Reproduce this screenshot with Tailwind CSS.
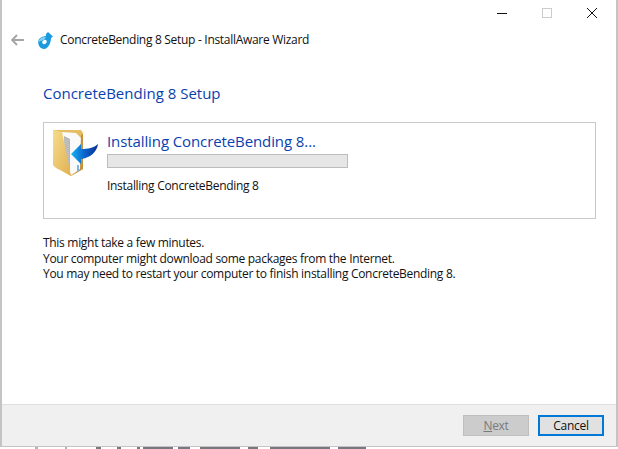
<!doctype html>
<html><head><meta charset="utf-8"><script src="https://cdn.jsdelivr.net/npm/@tailwindcss/browser@4"></script></head>
<body class="m-0 bg-white">
<div class="relative w-[618px] h-[449px] overflow-hidden bg-white font-['Open_Sans','Noto_Sans',sans-serif] text-[12px] tracking-[-0.3px] text-[#111]">
  <svg width="618" height="2" viewBox="0 0 618 2" class="absolute left-0 bottom-0">
    <path d="M35 0h3v2h-3zM65 0h2v2h-2z" fill="#b5b5b5"/>
    <path d="M96 0h5v2h-5zM117 0h4v2h-4zM137 0h3v2h-3zM143 0h30v2h-30zM178 0h12v2h-12zM200 0h40v2h-40zM248 0h10v2h-10zM270 0h60v2h-60zM338 0h28v2h-28z" fill="#4a4a55" fill-opacity="0.75"/>
  </svg>
  <div class="relative flex flex-col h-[447px] w-[618px] border-l-2 border-r-2 border-b border-[#c4c4c4] bg-white">
    <div class="flex justify-end h-[27px] pr-[19px] pt-[8px] gap-[35px] items-start">
      <svg width="10" height="10" viewBox="0 0 10 10"><path d="M0 5.500H10" stroke="#111" stroke-width="1"/></svg>
      <svg width="10" height="10" viewBox="0 0 10 10"><rect x=".5" y=".5" width="9" height="9" fill="none" stroke="#ccc"/></svg>
      <svg width="10" height="10" viewBox="0 0 10 10"><path d="M0 0l10 10M10 0L0 10" stroke="#111" stroke-width="1"/></svg>
    </div>
    <div class="flex items-center h-[26px] pl-[9px]">
      <svg width="14" height="12" viewBox="0 0 14 12"><path d="M6 1L1.200 6 6 11M1.500 6H13" fill="none" stroke="#a6a6a6" stroke-width="2"/></svg>
      <svg width="16" height="17" viewBox="0 0 16 17" class="ml-[13px]"><path d="M1 7c2-2 5-3 7-3V2l2-2 5 4.500-2 1.500c0 5-3 11-7 11C1 17-1 11 1 7z" fill="#1c9ade"/><path d="M1 8.500C2 6 5 4.500 8 5L6 8C4 8 2 9 1 10z" fill="#86d0f3"/><ellipse cx="6.500" cy="10" rx="2.400" ry="2" fill="#fff" transform="rotate(-30 6.500 10)"/></svg>
      <span class="ml-[6px]">ConcreteBending 8 Setup - InstallAware Wizard</span>
    </div>
    <div class="flex-1 pl-[41px] pt-[30px]">
      <h1 class="text-[15px] leading-[20px] font-normal tracking-normal text-[#0a3fb0]">ConcreteBending 8 Setup</h1>
      <div class="mt-[19px] h-[97px] w-[553px] border border-[#c8c8c8] flex pl-[7px] pt-[4px]">
        <svg width="48" height="52" viewBox="0 0 48 52" class="shrink-0">
          <defs>
            <linearGradient id="flap" x1="0" y1="0" x2="1" y2="1"><stop offset="0" stop-color="#f6dc8c"/><stop offset="1" stop-color="#e0b050"/></linearGradient>
            <linearGradient id="arrow" x1="0" y1="0" x2="1" y2="0"><stop offset="0" stop-color="#19b4f5"/><stop offset=".5" stop-color="#0a63cc"/><stop offset="1" stop-color="#0c2f8f"/></linearGradient>
          </defs>
          <path d="M2 3H30l2 3v36l-12 7L2 38z" fill="#e6bd62"/>
          <path d="M11 5l14 1 5 5v31l-10 6-6-6z" fill="#fafafa"/>
          <path d="M13 9l6 3v32l-5-4z" fill="#b4b4b4"/>
          <path d="M15 12v28M17 13v29" stroke="#e6e6e6" stroke-width=".7" stroke-dasharray="1 1"/>
          <path d="M2 3l9 2 9 44-11-6c-4-2-6-3-7-6z" fill="url(#flap)"/>
          <path d="M30 8l2-1v35l-12 7 9-7z" fill="#c4923c"/>
          <path d="M26 38l2 0v6l-2 1z" fill="#7fb4dc"/>
          <path d="M20 27l10-10v5c7 0 13-1 17-5-1 8-8 14-17 15v5z" fill="url(#arrow)"/>
        </svg>
        <div class="ml-[8px] flex flex-col">
          <div class="mt-[3px] text-[15px] tracking-[-0.1px] leading-[22px] text-[#0a3fb0]">Installing ConcreteBending 8...</div>
          <div class="mt-[2px] w-[241px] h-[14px] bg-[#e6e6e6] border border-[#bcbcbc]"></div>
          <div class="mt-[10px] leading-[16px]">Installing ConcreteBending 8</div>
        </div>
      </div>
      <div class="mt-[16px] leading-[15.500px]">
        <p>This might take a few minutes.</p>
        <p>Your computer might download some packages from the Internet.</p>
        <p>You may need to restart your computer to finish installing ConcreteBending 8.</p>
      </div>
    </div>
    <div class="h-[42px] border-t border-[#dfdfdf] bg-[#f0f0f0] flex items-center justify-end gap-[9px] pr-[12px]">
      <div class="w-[66px] h-[21px] bg-[#cccccc] border border-[#bfbfbf] flex items-center justify-center text-[#7a7a7a]"><span><u>N</u>ext</span></div>
      <div class="w-[66px] h-[21px] bg-[#e1e1e1] border-2 border-[#0078d7] flex items-center justify-center">Cancel</div>
    </div>
  </div>
</div>
</body></html>
